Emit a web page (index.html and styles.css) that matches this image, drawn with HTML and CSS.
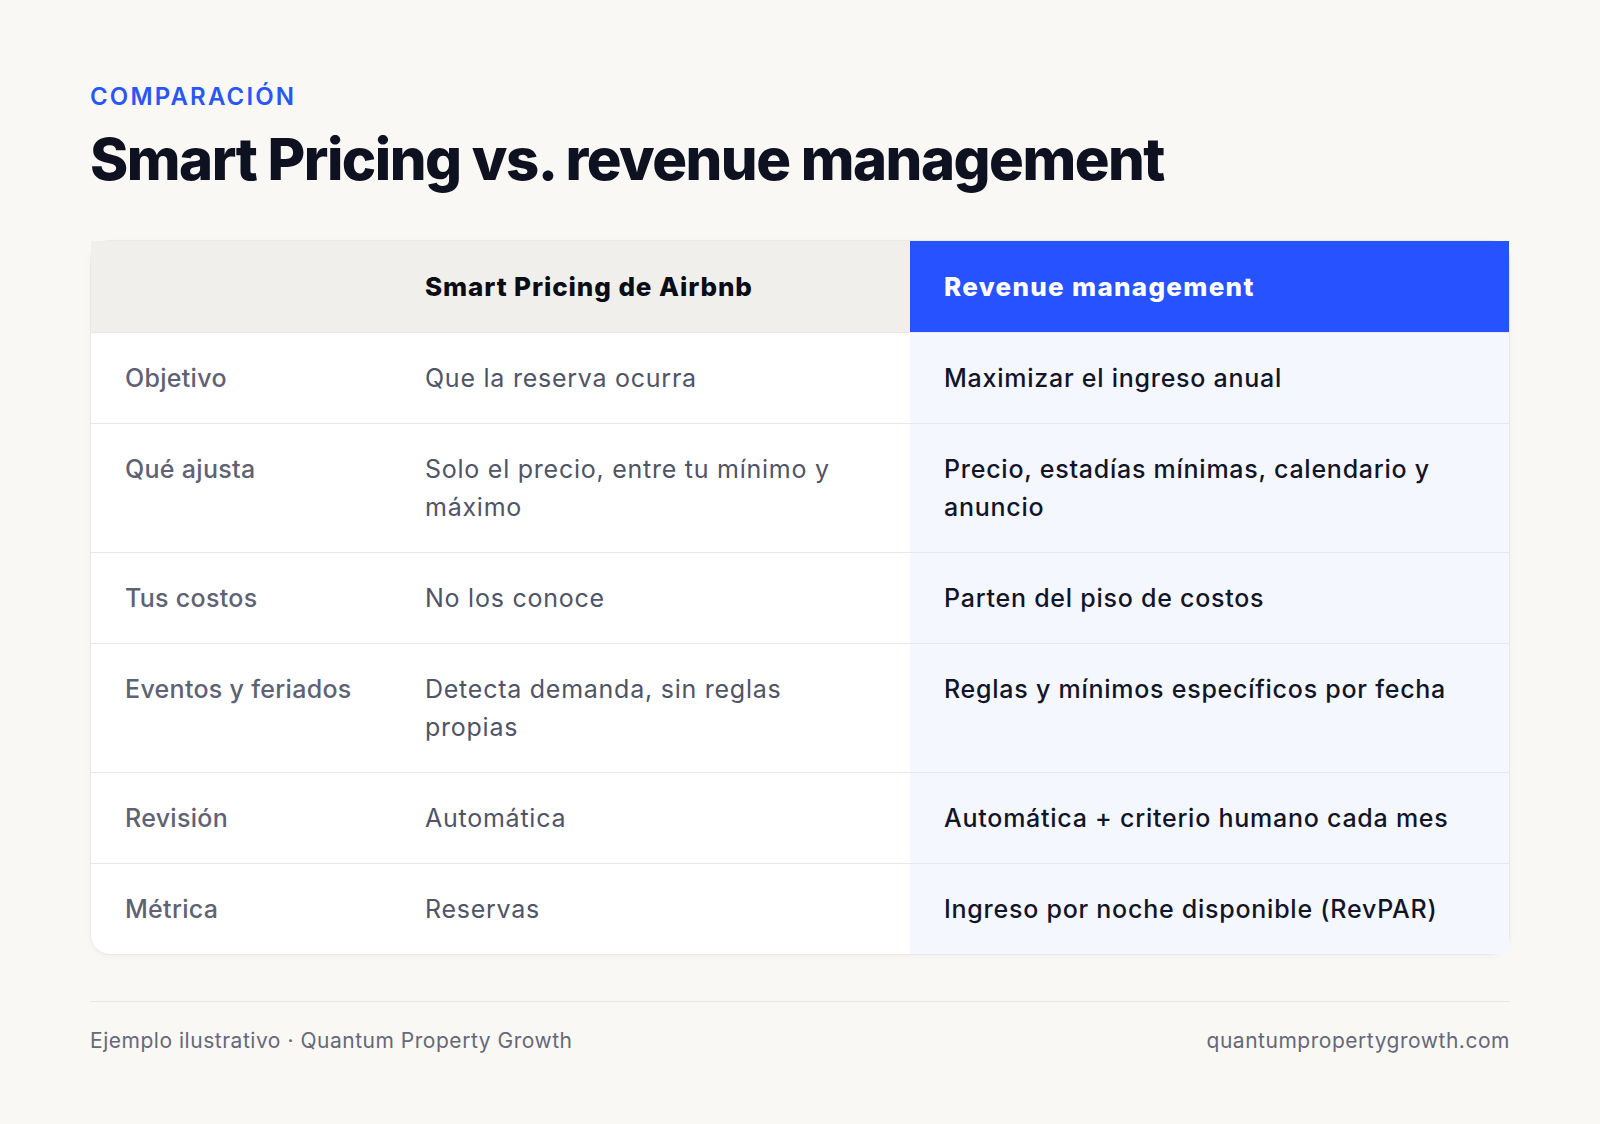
FILE: index.html
```html
<!DOCTYPE html>
<html lang="es">
<head>
<meta charset="utf-8">
<title>Smart Pricing vs. revenue management</title>
<link rel="stylesheet" href="styles.css">
</head>
<body>
<main class="page">
  <p class="eyebrow">COMPARACIÓN</p>
  <h1 class="title">Smart Pricing vs. revenue management</h1>

  <div class="table">
    <div class="row head">
      <div class="cell"></div>
      <div class="cell">Smart Pricing de Airbnb</div>
      <div class="cell hl">Revenue management</div>
    </div>
    <div class="row">
      <div class="cell label">Objetivo</div>
      <div class="cell plain">Que la reserva ocurra</div>
      <div class="cell hl">Maximizar el ingreso anual</div>
    </div>
    <div class="row">
      <div class="cell label">Qué ajusta</div>
      <div class="cell plain">Solo el precio, entre tu mínimo y máximo</div>
      <div class="cell hl">Precio, estadías mínimas, calendario y anuncio</div>
    </div>
    <div class="row">
      <div class="cell label">Tus costos</div>
      <div class="cell plain">No los conoce</div>
      <div class="cell hl">Parten del piso de costos</div>
    </div>
    <div class="row">
      <div class="cell label">Eventos y feriados</div>
      <div class="cell plain">Detecta demanda, sin reglas propias</div>
      <div class="cell hl">Reglas y mínimos específicos por fecha</div>
    </div>
    <div class="row">
      <div class="cell label">Revisión</div>
      <div class="cell plain">Automática</div>
      <div class="cell hl">Automática + criterio humano cada mes</div>
    </div>
    <div class="row">
      <div class="cell label">Métrica</div>
      <div class="cell plain">Reservas</div>
      <div class="cell hl">Ingreso por noche disponible (RevPAR)</div>
    </div>
  </div>

  <footer class="footer">
    <span>Ejemplo ilustrativo · Quantum Property Growth</span>
    <span>quantumpropertygrowth.com</span>
  </footer>
</main>
</body>
</html>
```

FILE: styles.css
```css
* { box-sizing: border-box; }

html, body {
  margin: 0;
  padding: 0;
  background: #f9f8f5;
}

body {
  font-family: Inter, "Noto Sans", "DejaVu Sans", sans-serif;
  color: #0f1222;
}

.page {
  width: 1600px;
  padding: 82px 90px 0;
}

.eyebrow {
  margin: 0;
  font-size: 24px;
  line-height: 29px;
  font-weight: 600;
  letter-spacing: 0.09em;
  color: #2a56f6;
}

.title {
  margin: 16px 0 0;
  font-size: 58px;
  line-height: 64px;
  font-weight: 800;
  letter-spacing: -0.026em;
  color: #0e1120;
}

.table {
  margin-top: 49px;
  background: #ffffff;
  border: 1px solid #ebe9e5;
  border-radius: 20px;
  box-shadow: 0 2px 6px rgba(20, 20, 40, 0.03);
}

.row {
  display: grid;
  grid-template-columns: 300px 519px 1fr;
}

.row + .row {
  border-top: 1px solid #e8e8ec;
}

.cell {
  padding: 26px 34px;
  font-size: 25px;
  line-height: 38px;
  letter-spacing: 0.03em;
}

.head .cell {
  background: #f0efec;
  font-weight: 800;
  font-size: 26px;
  line-height: 39px;
  letter-spacing: 0.035em;
  color: #0a0c16;
}

.head .cell.hl {
  background: #2653ff;
  color: #ffffff;
  letter-spacing: 0.05em;
}

.label {
  font-weight: 500;
  letter-spacing: 0.012em;
  color: #5e6273;
}

.plain {
  font-weight: 400;
  color: #4f5466;
}

.hl {
  background: #f5f7ff;
  font-weight: 500;
  color: #121527;
}

.footer {
  margin-top: 46px;
  border-top: 1px solid #e9e7e2;
  padding-top: 24px;
  display: flex;
  justify-content: space-between;
  font-size: 21px;
  line-height: 30px;
  letter-spacing: 0.025em;
  color: #646878;
}
```
